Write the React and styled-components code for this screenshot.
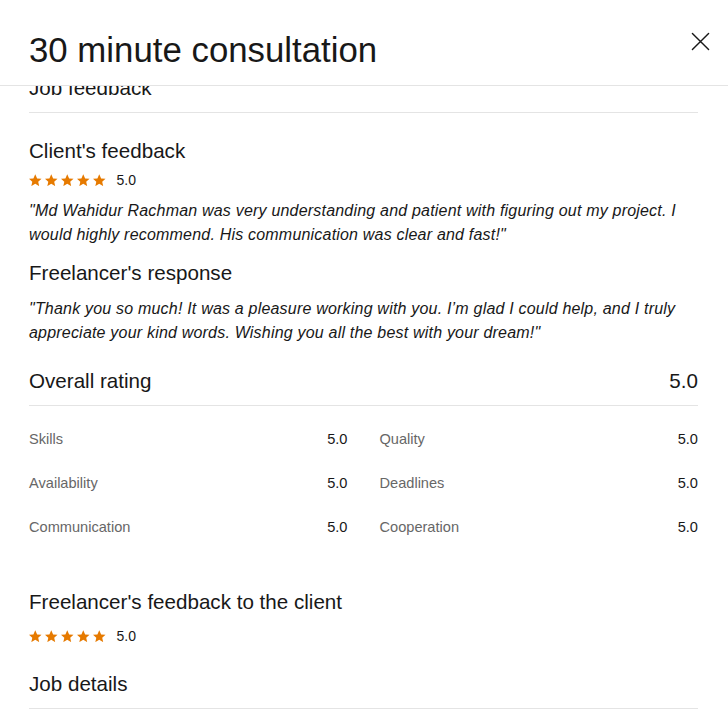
import React, { useLayoutEffect, useRef } from "react";
import styled, { createGlobalStyle } from "styled-components";

const GlobalStyle = createGlobalStyle`
  html, body {
    margin: 0;
    padding: 0;
    background: #ffffff;
  }
  body {
    font-family: "Liberation Sans", Arial, sans-serif;
    color: #181818;
    -webkit-font-smoothing: antialiased;
  }
  * { box-sizing: border-box; }
`;

const Modal = styled.div`
  width: 728px;
  height: 722px;
  display: flex;
  flex-direction: column;
  background: #fff;
  overflow: hidden;
`;

const Header = styled.header`
  height: 86px;
  flex: 0 0 auto;
  display: flex;
  align-items: flex-start;
  justify-content: space-between;
  padding: 28px 17px 0 29px;
  border-bottom: 1px solid #e4e4e4;
`;

const Title = styled.h1`
  margin: 0;
  font-size: 34.8px;
  font-weight: 400;
  line-height: 44px;
  color: #181818;
`;

const CloseButton = styled.button`
  border: 0;
  background: transparent;
  padding: 0;
  width: 22px;
  height: 22px;
  margin-top: 2px;
  display: flex;
  align-items: center;
  justify-content: center;
  cursor: pointer;
  color: #181818;
`;

const Body = styled.div`
  flex: 1 1 auto;
  overflow: hidden;
  padding: 0 30px 0 29px;
`;

const SectionTitle = styled.h2`
  margin: ${(p) => p.$mt || 0}px 0 0;
  font-size: 20.6px;
  font-weight: 400;
  line-height: 28px;
  color: #181818;
  ${(p) =>
    p.$divided &&
    `
    padding-bottom: 10px;
    border-bottom: 1px solid #e4e4e4;
  `}
`;

const TitleRow = styled.div`
  display: flex;
  justify-content: space-between;
  align-items: center;
  margin-top: ${(p) => p.$mt || 0}px;
  padding-bottom: 10px;
  border-bottom: 1px solid #e4e4e4;
`;

const TitleText = styled.span`
  font-size: 20.6px;
  line-height: 28px;
  color: #181818;
`;

const RatingRow = styled.div`
  display: flex;
  align-items: center;
  height: 20px;
  margin-top: ${(p) => p.$mt || 0}px;
`;

const Stars = styled.div`
  display: flex;
  gap: 3.5px;
  color: #e67a00;
`;

const Score = styled.span`
  margin-left: 11px;
  font-size: 14px;
  line-height: 20px;
  color: #181818;
`;

const Quote = styled.p`
  margin: ${(p) => p.$mt || 0}px 0 0;
  font-size: 16px;
  font-style: italic;
  letter-spacing: 0.2px;
  line-height: 24px;
  color: #181818;
`;

const Grid = styled.div`
  display: grid;
  grid-template-columns: 1fr 1fr;
  column-gap: 32px;
  row-gap: 24px;
  margin-top: 23px;
`;

const Metric = styled.div`
  display: flex;
  justify-content: space-between;
  font-size: 14.6px;
  line-height: 20px;
`;

const MetricLabel = styled.span`
  color: #676767;
`;

const MetricValue = styled.span`
  color: #181818;
`;

const DetailRow = styled.div`
  display: flex;
  justify-content: space-between;
  font-size: 14.6px;
  line-height: 20px;
  margin-top: 24px;
`;

const Star = () => (
  <svg width="12.5" height="12.5" viewBox="1 1.2 22 21" fill="currentColor" aria-hidden="true">
    <path d="M12 1.2l3.3 7.2 7.7.8-5.8 5.2 1.7 7.6L12 18l-6.9 4 1.7-7.6L1 9.2l7.7-.8z" />
  </svg>
);

const StarRating = ({ value, mt }) => (
  <RatingRow $mt={mt}>
    <Stars>
      {[0, 1, 2, 3, 4].map((i) => (
        <Star key={i} />
      ))}
    </Stars>
    <Score>{value}</Score>
  </RatingRow>
);

const metrics = [
  ["Skills", "5.0"],
  ["Quality", "5.0"],
  ["Availability", "5.0"],
  ["Deadlines", "5.0"],
  ["Communication", "5.0"],
  ["Cooperation", "5.0"],
];

export default function App() {
  const bodyRef = useRef(null);
  useLayoutEffect(() => {
    if (bodyRef.current) bodyRef.current.scrollTop = 12;
  }, []);

  return (
    <>
      <GlobalStyle />
      <Modal>
        <Header>
          <Title>30 minute consultation</Title>
          <CloseButton aria-label="Close">
            <svg width="19" height="19" viewBox="0 0 20 20" fill="none" stroke="currentColor" strokeWidth="1.5" strokeLinecap="round">
              <path d="M1.5 1.5l17 17M18.5 1.5l-17 17" />
            </svg>
          </CloseButton>
        </Header>
        <Body ref={bodyRef}>
          <SectionTitle $divided>Job feedback</SectionTitle>

          <SectionTitle $mt={24}>Client's feedback</SectionTitle>
          <StarRating value="5.0" mt={5} />
          <Quote $mt={9}>
            "Md Wahidur Rachman was very understanding and patient with figuring out my project. I would highly
            recommend. His communication was clear and fast!"
          </Quote>

          <SectionTitle $mt={12}>Freelancer's response</SectionTitle>
          <Quote $mt={10}>
            "Thank you so much! It was a pleasure working with you. I’m glad I could help, and I truly appreciate your
            kind words. Wishing you all the best with your dream!"
          </Quote>

          <TitleRow $mt={22}>
            <TitleText>Overall rating</TitleText>
            <TitleText>5.0</TitleText>
          </TitleRow>

          <Grid>
            {metrics.map(([label, value]) => (
              <Metric key={label}>
                <MetricLabel>{label}</MetricLabel>
                <MetricValue>{value}</MetricValue>
              </Metric>
            ))}
          </Grid>

          <SectionTitle $mt={51}>Freelancer's feedback to the client</SectionTitle>
          <StarRating value="5.0" mt={10} />

          <SectionTitle $mt={24} $divided>
            Job details
          </SectionTitle>
          <DetailRow>
            <MetricLabel>Contract type</MetricLabel>
            <MetricValue>Fixed price</MetricValue>
          </DetailRow>
          <DetailRow>
            <MetricLabel>Duration</MetricLabel>
            <MetricValue>30 minutes</MetricValue>
          </DetailRow>
          <DetailRow>
            <MetricLabel>Total earned</MetricLabel>
            <MetricValue>$50.00</MetricValue>
          </DetailRow>
        </Body>
      </Modal>
    </>
  );
}
